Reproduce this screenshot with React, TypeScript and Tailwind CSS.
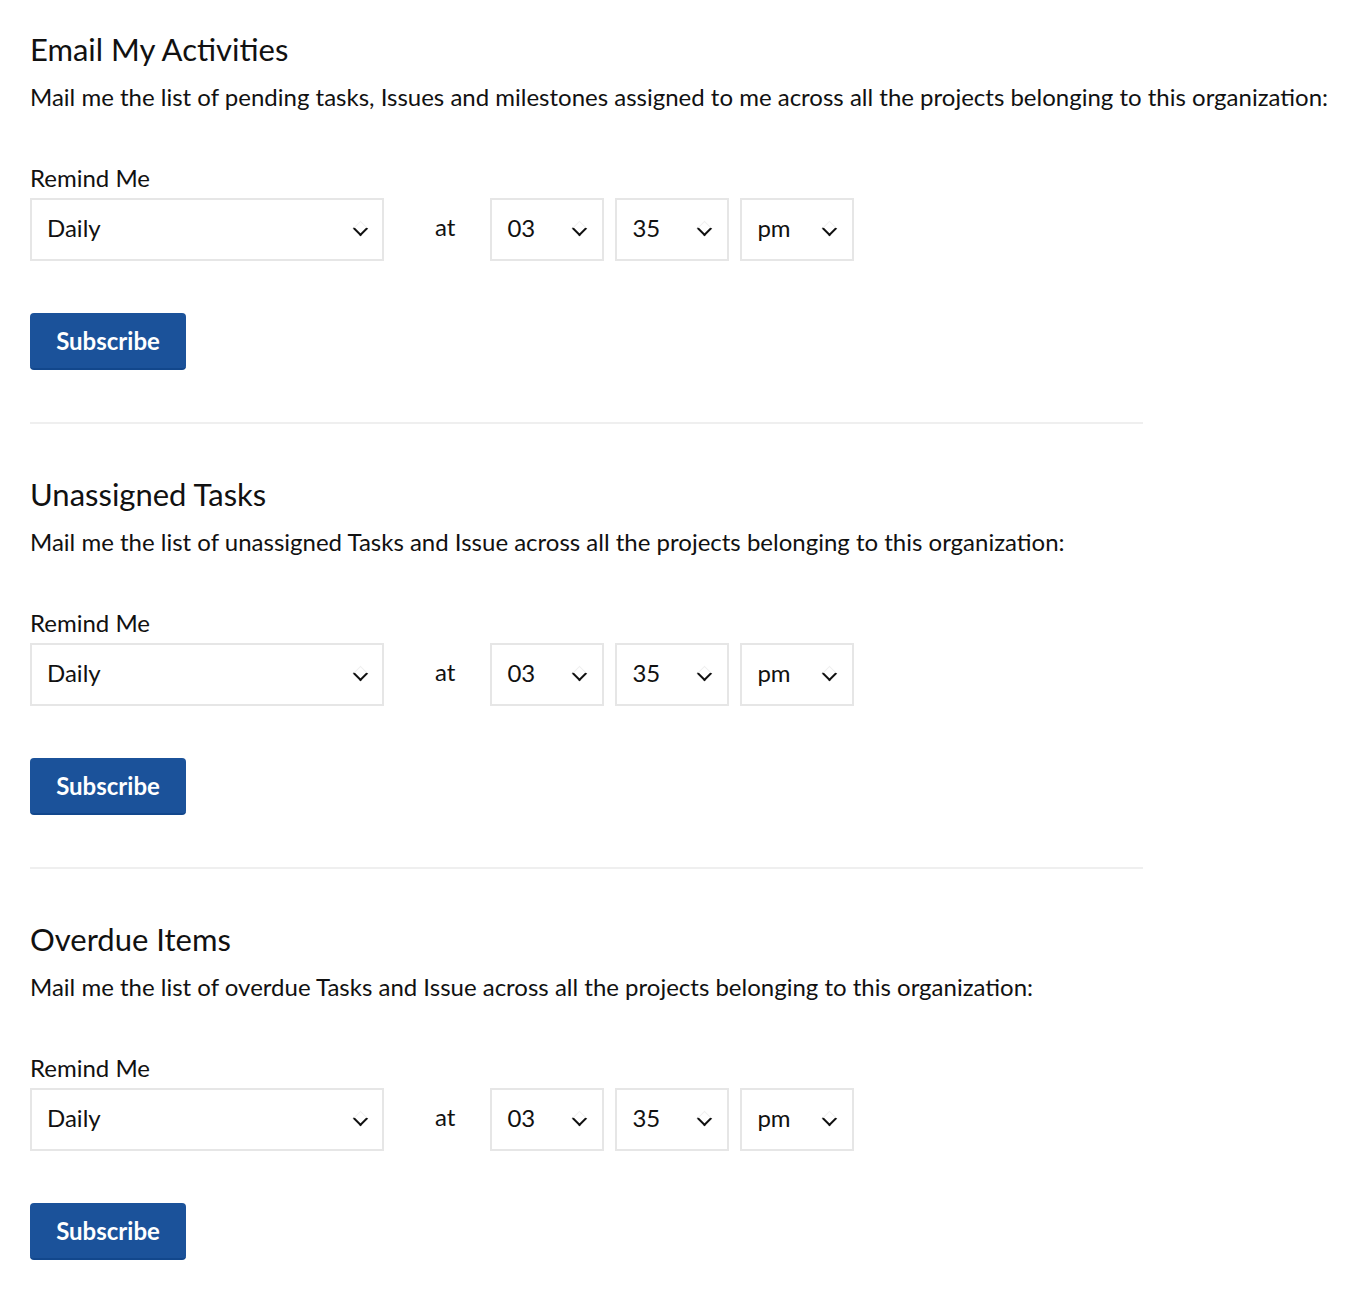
import { useState } from "react";

const Chevron = () => (
  <span className="block w-[11px] h-[11px] rotate-45 border-t border-l border-t-[#efefef] border-l-[#efefef] border-r-[2.5px] border-b-[2.5px] border-r-[#111] border-b-[#111] -mt-[3px]"></span>
);

const Select = ({ value, width, padRight }: { value: string; width: string; padRight: string }) => (
  <div className={`flex items-center justify-between h-[63px] border-2 border-[#e6e6e6] bg-white pl-[15px] ${width} ${padRight}`}>
    <span className="text-[24px] text-[#111] -mt-[3px]">{value}</span>
    <Chevron />
  </div>
);

const Section = ({ title, desc, last }: { title: string; desc: string; last?: boolean }) => {
  const [subscribed, setSubscribed] = useState(false);
  return (
    <div>
      <h2 className="text-[31px] leading-[36px] text-[#111]">{title}</h2>
      <p className="mt-[15px] text-[24px] leading-[30px] text-[#111] whitespace-nowrap">{desc}</p>
      <p className="mt-[51px] text-[24px] leading-[30px] text-[#111]">Remind Me</p>
      <div className="mt-[5px] flex items-center">
        <Select value="Daily" width="w-[354px]" padRight="pr-[16px]" />
        <span className="ml-[51px] mr-[35px] text-[24px] text-[#111] -mt-[5px]">at</span>
        <div className="flex gap-[11px]">
          <Select value="03" width="w-[114px]" padRight="pr-[17px]" />
          <Select value="35" width="w-[114px]" padRight="pr-[17px]" />
          <Select value="pm" width="w-[114px]" padRight="pr-[17px]" />
        </div>
      </div>
      <button
        onClick={() => setSubscribed(!subscribed)}
        className="mt-[52px] w-[156px] h-[57px] rounded-[4px] bg-[#1b529a] border-b-2 border-[#12478c] text-white text-[24px] font-bold"
      >
        Subscribe
      </button>
      {!last && <div className="mt-[52px] mb-[52px] h-[2px] w-[1113px] bg-[#efefef]"></div>}
    </div>
  );
};

export default function App() {
  return (
    <div className="min-h-[1293px] bg-white pl-[30px] pt-[31px] font-['Lato','Open_Sans',sans-serif]">
      <Section
        title="Email My Activities"
        desc="Mail me the list of pending tasks, Issues and milestones assigned to me across all the projects belonging to this organization:"
      />
      <Section
        title="Unassigned Tasks"
        desc="Mail me the list of unassigned Tasks and Issue across all the projects belonging to this organization:"
      />
      <Section
        title="Overdue Items"
        desc="Mail me the list of overdue Tasks and Issue across all the projects belonging to this organization:"
        last
      />
    </div>
  );
}
